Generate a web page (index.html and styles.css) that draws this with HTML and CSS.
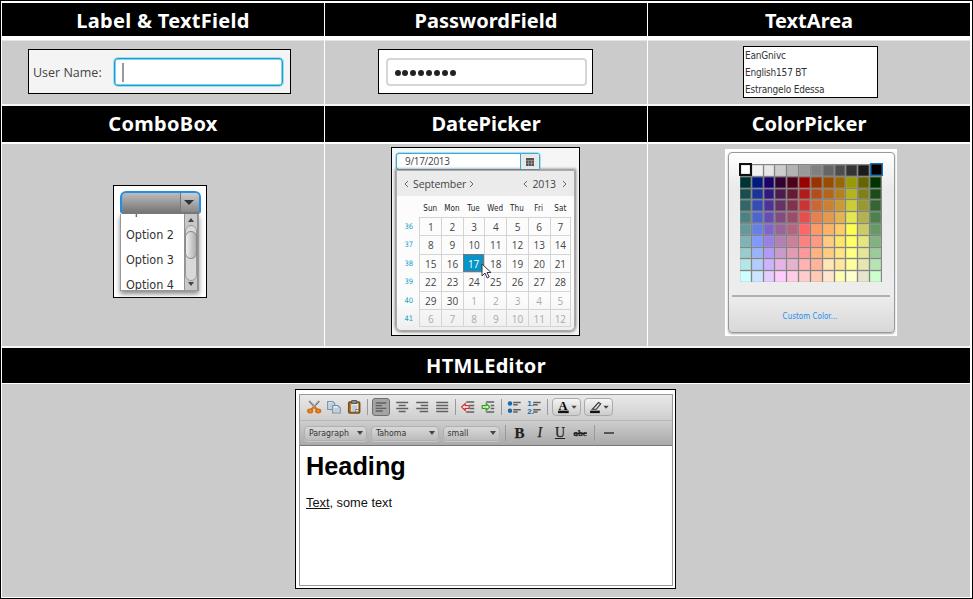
FILE: index.html
```html
<!DOCTYPE html>
<html lang="en">
<head>
<meta charset="utf-8">
<title>UI Controls</title>
<link rel="stylesheet" href="styles.css">
</head>
<body>
<main class="sheet">
  <h2 class="head h1 wide">Label &amp; TextField</h2>
  <h2 class="head h1">PasswordField</h2>
  <h2 class="head h1">TextArea</h2>

  <section class="cell c1">
    <div class="frame login"><label>User Name:</label><div class="field"><i></i></div></div>
  </section>
  <section class="cell c1">
    <div class="frame pass"><div class="pwd"><i></i><i></i><i></i><i></i><i></i><i></i><i></i><i></i></div></div>
  </section>
  <section class="cell c1">
    <div class="frame area"><p>EanGnivc</p><p>English157 BT</p><p>Estrangelo Edessa</p></div>
  </section>

  <h2 class="head h2 wide">ComboBox</h2>
  <h2 class="head h2">DatePicker</h2>
  <h2 class="head h2">ColorPicker</h2>

  <section class="cell c2">
    <div class="frame combo">
      <div class="combo-btn"><span></span><b><svg width="10" height="5"><path d="M0 0h10L5 5z" fill="#333"/></svg></b></div>
      <div class="combo-list">
        <div class="options"><p>Option 1</p><p>Option 2</p><p>Option 3</p><p>Option 4</p></div>
        <svg class="scroll" width="14" height="77" viewBox="0 0 14 77">
          <defs><linearGradient id="thumb"><stop offset="0" stop-color="#f2f2f2"/><stop offset="1" stop-color="#aaa"/></linearGradient></defs>
          <path d="M0 0h14v77H0z" fill="#c8c8c8"/><path d="M.5 0v77M13.500 0v77" stroke="#929292"/>
          <rect x="1.500" y="11.500" width="11" height="55" rx="5.500" fill="#d9d9d9" stroke="#999"/>
          <rect x="1.500" y="17.500" width="11" height="27" rx="5.500" fill="url(#thumb)" stroke="#888"/>
          <path d="M4 8h6L7 4zM4 68h6l-3 4z" fill="#444"/>
        </svg>
      </div>
    </div>
  </section>
  <section class="cell c2">
    <div class="frame date">
      <div class="date-field"><span>9/17/2013</span><b><svg width="8" height="8" viewBox="0 0 8 8"><path d="M0 0h8v8H0z" fill="#555"/><path d="M0 2.500h8M0 5.200h8M2.500 2v6M5.500 2v6" stroke="#aaa" stroke-width=".6"/></svg></b></div>
      <div class="popup">
        <div class="month">
          <svg width="5" height="8"><path d="M4 1L1 4l3 3" /></svg><span class="m">September</span><svg width="5" height="8"><path d="M1 1l3 3-3 3"/></svg>
          <svg class="push" width="5" height="8"><path d="M4 1L1 4l3 3"/></svg><span class="y">2013</span><svg width="5" height="8"><path d="M1 1l3 3-3 3"/></svg>
        </div>
        <div class="days" id="days"></div>
      </div>
      <svg class="cursor" width="11" height="17" viewBox="0 0 11 17"><path d="M1 1v12l3-3 2.200 5 2-1-2.200-4.500H10z" fill="#fff" stroke="#334" stroke-width="1"/></svg>
    </div>
  </section>
  <section class="cell c2">
    <div class="picker"><div class="palette-box"><div class="palette" id="palette"></div><hr><a>Custom Color...</a></div></div>
  </section>

  <h2 class="head h3 wide">HTMLEditor</h2>
  <section class="cell c3">
    <div class="frame editor"><div class="inner">
      <div class="bar one">
        <svg viewBox="0 0 20 20"><path d="M5 4l8.500 9M15 4l-8.500 9" stroke="#666" stroke-width="1.800"/><path d="M5.500 4l6 6.500M14.500 4l-6 6.500" stroke="#ddd" stroke-width=".6"/><g fill="#f0a040" stroke="#d96b0c" stroke-width="1.700"><ellipse cx="6" cy="14" rx="2.300" ry="1.600"/><ellipse cx="14" cy="14" rx="2.300" ry="1.600"/></g><path d="M7.500 13l2.500-3 2.500 3" fill="none" stroke="#e07818" stroke-width="1.700"/></svg>
        <svg viewBox="0 0 20 20"><g fill="#dce8f1" stroke="#7890a4" stroke-width="1.200"><path d="M3.500 4.500h5l2 2v6h-7z"/><path d="M8.500 8.500h5l2.500 2.500v5H8.500z"/></g><path d="M5 7h4M5 9h3M5 11h3M10 12h4.500M10 14h4.500" stroke="#91a9bc" stroke-width=".8"/></svg>
        <svg viewBox="0 0 20 20"><rect x="4.500" y="5" width="11" height="11" rx="1" fill="#b87a28" stroke="#715020"/><path d="M7 6.500h7v8H7z" fill="#e8edf2" stroke="none"/><path d="M7.500 3.500h5v3h-5z" fill="#888" stroke="#444" stroke-width=".8"/><path d="M8 9h5M8 11h5M8 13h3" stroke="#8799aa" stroke-width=".8"/><path d="M11.500 15v-2.500h3" stroke="#567" stroke-width=".8" fill="none"/></svg>
        <i class="sep s7"></i>
        <svg class="pressed" viewBox="1 1 18 18"><path d="M4 5.500h12M4 8.500h7M4 11.500h12M4 14.500h8"/></svg>
        <svg viewBox="0 0 20 20"><path d="M4 5.500h12M6.500 8.500h7M4 11.500h12M6.500 14.500h7"/></svg>
        <svg viewBox="0 0 20 20"><path d="M4 5.500h12M8.500 8.500H16M4 11.500h12M7.500 14.500H16"/></svg>
        <svg viewBox="0 0 20 20"><path d="M4 5.500h12M4 8.500h12M4 11.500h12M4 14.500h12"/></svg>
        <i class="sep s5"></i>
        <svg viewBox="0 0 20 20"><path d="M8 5h8M11.500 8.500H16M11.500 11.500H16M8 15h8"/><path d="M3.500 10l3.500-3.300v2h4v2.600H7v2z" fill="#fff" stroke="#c33" stroke-width="1.200"/></svg>
        <svg viewBox="0 0 20 20"><path d="M8 5h8M12.500 8.500H16M12.500 11.500H16M8 15h8"/><path d="M11.500 10L8 6.700v2H4v2.600h4v2z" fill="#dfd" stroke="#3a9d1c" stroke-width="1.200"/></svg>
        <i class="sep s5"></i>
        <svg viewBox="0 0 20 20"><circle cx="5.800" cy="6.500" r="2.200" fill="#1769aa" stroke="none"/><circle cx="5.800" cy="13.800" r="2.200" fill="#1769aa" stroke="none"/><path d="M9 5.500h7.500M9 7.800h4.500M9 12.700h7.500M9 15h4.500"/></svg>
        <svg viewBox="0 0 20 20"><path d="M9 5.500h7.500M9 7.800h4.500M9 12.700h7.500M9 15h4.500"/><g class="nums"><text x="3" y="9">1.</text><text x="3" y="16.500">2.</text></g></svg>
        <i class="sep s7"></i>
        <span class="drop"><svg viewBox="0 0 28 18"><text class="fore" x="5" y="12">A</text><path d="M4.500 14.500h12" stroke="#111" stroke-width="2.800"/><path d="M19.500 7.500h6l-3 3.500z" fill="#444" stroke="none"/></svg></span>
        <span class="drop"><svg viewBox="0 0 28 18"><path d="M4.500 14.500h11" stroke="#111" stroke-width="2.800"/><path d="M8.500 10l5.500-6 2.500 1.500-5 6H7z" fill="#ddd" stroke="#333" stroke-width="1.200"/><path d="M19.500 7.500h6l-3 3.500z" fill="#444" stroke="none"/></svg></span>
      </div>
      <div class="bar two">
        <span class="select w1">Paragraph</span><span class="select w2">Tahoma</span><span class="select w3">small</span>
        <i class="sep s14"></i><b class="fmt">B</b><em class="fmt">I</em><u class="fmt">U</u><s class="fmt">abc</s><i class="sep s9"></i><i class="rule"></i>
      </div>
      <div class="doc"><h1>Heading</h1><p><u>Text</u>, some text</p></div>
    </div></div>
  </section>
</main>
<script src="script.js"></script>
</body>
</html>
```
FILE: styles.css
```css
* { box-sizing: border-box; }
body { margin: 0; background: #000; font-family: "Open Sans", "Noto Sans", sans-serif; }
p, h1, h2 { margin: 0; }
.sheet { width: 971px; height: 597px; margin: 1px; padding: 2px 2px 1px 1px; background: #fff; display: grid; grid-template-columns: repeat(3, 322px); grid-template-rows: 37px 66px 38px 204px 36px 213px; column-gap: 1px; }
.head { background: #000; color: #fff; font: bold 20px/36px "Noto Sans", sans-serif; text-align: center; border-bottom: 2px solid #fff; }
.wide { letter-spacing: .3px; }
.h1 { border-bottom-width: 4px; line-height: 35px; }
.h3 { grid-column: 1 / 4; border-bottom-width: 1px; line-height: 36px; }
.cell { background: #cbcbcb; border-bottom: 2px solid #f6f6f6; }
.c1 { border-top: 1px solid #e4e4e4; }
.c3 { grid-column: 1 / 4; border: 0; }
.frame { border: 1px solid #000; background: #fff; }

.login { width: 263px; height: 45px; margin: 8px 0 0 26px; background: #f4f4f4; display: flex; align-items: center; padding-left: 4px; font-size: 12.5px; color: #444; }
.login label { width: 81px; white-space: nowrap; padding-top: 1px; }
.field { width: 169px; height: 28px; border: 1px solid #159fd2; box-shadow: 0 0 0 1px #a5def2, inset 0 0 0 .5px #159fd2; border-radius: 4px; background: #fff; padding: 4px 7px; }
.field i { display: block; width: 2px; height: 19px; background: #999; }
.pass { width: 215px; height: 45px; margin: 8px 0 0 53px; padding: 8px 5px 0 7px; }
.pwd { height: 28px; border: 2px solid #d6d6d6; border-radius: 4px; display: flex; align-items: center; gap: 1.9px; padding: 1px 0 0 6.5px; }
.pwd i { width: 6px; height: 6px; border-radius: 50%; background: #222; }
.area { width: 135px; height: 52px; margin: 5px 0 0 95px; padding-left: 1px; font: 10px/17px "DejaVu Sans Condensed", "DejaVu Sans", sans-serif; letter-spacing: -.2px; color: #333; }

.combo { width: 94px; height: 113px; margin: 41px 0 0 111px; padding: 5px 5px 0 6px; }
.combo-btn { width: 81px; height: 23px; display: flex; border: 2px solid #218fe5; border-bottom-color: #777; border-radius: 6px 6px 3px 3px; background: linear-gradient(#bbb, #999 50%, #777); }
.combo-btn span { flex: 1; }
.combo-btn b { width: 19px; padding-right: 2px; border-left: 1px solid #777; display: flex; align-items: center; justify-content: center; background: linear-gradient(#ccc, #888); border-radius: 0 4px 0 0; }
.combo-list { width: 79px; height: 77px; display: flex; border: 1px solid #999; border-top: 0; box-shadow: 0 3px 5px #888; overflow: hidden; background: #fff; }
.options { flex: 1; overflow: hidden; font: 12.5px/25px "DejaVu Sans Condensed", "DejaVu Sans", sans-serif; color: #333; padding-left: 5px; white-space: nowrap; letter-spacing: -.05px; }
.options p { position: relative; top: -17px; }

.date { position: relative; width: 189px; height: 189px; margin: 3px 0 0 66px; padding: 5px 4px; background: #f6f6f6; }
.date-field { display: flex; width: 144px; height: 17px; border: 1px solid #35add5; border-radius: 3px; box-shadow: 0 0 0 .5px #65c3df; background: #fff; font-size: 10px; line-height: 15px; letter-spacing: -.3px; color: #444; }
.date-field span { flex: 1; padding-left: 8px; }
.date-field b { width: 19px; border-left: 1px solid #35add5; background: #e8e8e8; display: flex; justify-content: center; align-items: center; }
.popup { width: 179px; height: 161px; border: 1px solid #aaa; border-radius: 0 0 5px 5px; box-shadow: 0 0 3px 1px #777; background: linear-gradient(#fcfcfc 80%, #eee); }
.month { height: 25px; background: #ebebeb; display: flex; align-items: center; padding: 0 7px 0 7px; font-size: 10.5px; color: #444; letter-spacing: -.1px; }
.month svg { fill: none; stroke: #666; }
.m { margin: 0 3px 0 4px; }
.y { margin: 0 6px 0 4px; }
.push { margin-left: auto; }
.days { display: grid; grid-template-columns: 22.4px repeat(7, 21.7px); grid-template-rows: 21px repeat(6, 18.4px); text-align: center; font-size: 10px; line-height: 18px; color: #444; }
.days .name { font: 8px/26px "DejaVu Sans Condensed", "DejaVu Sans", sans-serif; color: #222; letter-spacing: .1px; }
.days .week { color: #159cc9; font: 7.5px/20px "DejaVu Sans Condensed", "DejaVu Sans", sans-serif; padding-left: 1px; }
.days .day { border: solid #d4d4d4; border-width: 1px 0 0 1px; }
.days .edge { border-right-width: 1px; }
.days .last { border-bottom-width: 1px; }
.days .other { color: #aaa; }
.days .picked { background: #0795c9; color: #fff; border: 1px solid #777; }
.cursor { position: absolute; left: 89px; top: 115px; }

.picker { width: 172px; height: 187px; margin: 5px 0 0 77px; padding: 3px; background: #fff; }
.palette-box { height: 181px; width: 167px; padding: 11px 4px 0; border: 1px solid #999; border-radius: 4px; box-shadow: 0 1px 2px #aaa; background: linear-gradient(#fff, #eaeaea 20%, #ededed 80%, #d8d8d8); }
.palette { display: grid; grid-template-columns: repeat(12, 11.83px); grid-template-rows: repeat(10, 11.8px); width: 142px; margin-left: 7px; }
.palette i { border: solid #858585; border-width: 1px 1px 0 0; box-shadow: inset 0 0 0 .5px #aaa8; }
.palette .first { border: 2px solid #111; margin: -1px 0 0 -1px; }
.palette .final { border: 1px solid #0875ce; margin: -1px -1px 0 0; }
.palette-box hr { border: 0; height: 2px; margin: 13px 0 13px -1px; background: #b0b0b0; }
.palette-box a { display: block; text-align: center; color: #1b91ef; font: 8px/13px "DejaVu Sans Condensed", "DejaVu Sans", sans-serif; margin-right: 3px; }

.editor { width: 381px; height: 200px; margin: 5px 0 0 293px; padding: 4px 2px 2px 3px; }
.inner { width: 374px; height: 192px; border: 1px solid #999; }
.bar { display: flex; align-items: center; }
.one { height: 25px; padding: 0 0 2px 3.5px; background: linear-gradient(#e9e9e9, #cecece); }
.two { height: 26px; padding-left: 4px; background: linear-gradient(#cecece, #aaa); border-top: 1px solid #b8b8b8; border-bottom: 1px solid #777; }
.one > svg { width: 20.4px; height: 20px; flex: none; fill: none; stroke: #606060; stroke-width: 1.500; }
.one .pressed { width: 18px; height: 18px; margin: 0 1.2px; border: 1px solid #707070; border-radius: 3px; background: #a4a4a4; }
.sep { flex: none; height: 16px; background: linear-gradient(#999, #999) center / 1px 100% no-repeat; }
.s5 { width: 5px; } .s7 { width: 6.5px; } .s14 { width: 12px; margin: 0 -2px 0 -4px; } .s9 { width: 9px; }
.nums text { font: bold 8px "Liberation Sans", sans-serif; fill: #1769aa; stroke: none; }
.drop { width: 29px; height: 18px; margin: 0 2px 0 1px; border: 1px solid #aaa; border-radius: 4px; background: linear-gradient(#f4f4f4, #ccc); }
.drop svg { display: block; width: 27px; height: 16px; }
.fore { font: bold 14px "Liberation Serif", serif; }
.select { height: 15px; border: 1px solid #b0b0b0; border-radius: 4px; background: linear-gradient(#d8d8d8, #bcbcbc); box-shadow: 0 1px 0 #ddd8; font: 8.7px/13px "DejaVu Sans Condensed", "DejaVu Sans", sans-serif; padding: 0 3px 0 4px; margin-right: 4px; display: flex; align-items: center; justify-content: space-between; color: #333; }
.select::after { content: ""; border: 3px solid transparent; border-top: 4px solid #444; border-bottom: 0; }
.w1 { width: 63px; } .w2 { width: 67.5px; } .w3 { width: 57px; }
.fmt { width: 20.2px; text-align: center; font-family: "Liberation Serif", serif; font-size: 14px; color: #222; -webkit-text-stroke: .25px; }
b.fmt { font-size: 15px; }
s.fmt { font-size: 9px; font-weight: bold; letter-spacing: -.1px; }
.rule { width: 10px; height: 2px; margin-left: 5px; background: #555; }
.doc { padding: 5px 6px; font: 12.8px/16px "Liberation Sans", sans-serif; color: #111; }
.doc h1 { font-size: 25.3px; line-height: 31px; color: #000; margin-bottom: 13px; }
```
FILE: script.js
```javascript
const days = document.getElementById('days');
function add(parent, tag, cls, text) {
  const el = document.createElement(tag);
  el.className = cls;
  el.textContent = text;
  parent.append(el);
  return el;
}
['', 'Sun', 'Mon', 'Tue', 'Wed', 'Thu', 'Fri', 'Sat'].forEach(n => add(days, 'span', 'name', n));
for (let r = 0; r < 6; r++) {
  add(days, 'span', 'week', 36 + r);
  for (let c = 0; c < 7; c++) {
    const n = r * 7 + c + 1;
    let cls = 'day';
    if (n > 30) cls += ' other';
    if (n === 17) cls += ' picked';
    if (c === 6) cls += ' edge';
    if (r === 5) cls += ' last';
    add(days, 'span', cls, n > 30 ? n - 30 : n);
  }
}

const rows = [
  'ffffff f2f2f2 e6e6e6 cccccc b3b3b3 999999 808080 666666 4d4d4d 333333 1a1a1a 000000',
  '003333 001a80 1a0068 330033 4d001a 990000 993300 994d00 996600 999900 666600 003300',
  '1a4d4d 1a3399 2e1a80 4d1a4d 661a33 b31a1a b34d1a b3661a b3801a b3b31a 808019 1a4d1a',
  '336666 334db3 4d3399 663366 80334d cc3333 cc6633 cc8033 cc9933 cccc33 999933 336633',
  '4d8080 4d66cc 664db3 804d80 994d66 e64d4d e6804d e6994d e6b34d e6e64d b3b34d 4d804d',
  '669999 6680e6 8066cc 996699 b36680 ff6666 ff9966 ffb366 ffcc66 ffff4d cccc66 669966',
  '80b3b3 8099ff 9980e6 b380b3 cc8099 ff8080 ff9980 ffcc80 ffe666 ffff66 e6e680 80b380',
  '99cccc 99b3ff b399ff cc99cc e699b3 ff9999 ffb380 ffcc80 ffe680 ffff80 e6e699 99cc99',
  'b3e6e6 b3ccff ccb3ff e6b3e6 e6b3cc ffb3b3 ffb399 ffe6b3 ffe699 ffff99 e6e6b3 b3e6b3',
  'ccffff cce6ff e6ccff ffccff ffcce6 ffcccc ffccb3 ffe6cc ffffb3 ffffcc e6e6cc ccffcc'
];
const colors = rows.join(' ').split(' ');
const palette = document.getElementById('palette');
colors.forEach((color, i) => {
  const el = add(palette, 'i', i === 0 ? 'first' : i === 11 ? 'final' : '', '');
  el.style.backgroundColor = '#' + color;
});
```
